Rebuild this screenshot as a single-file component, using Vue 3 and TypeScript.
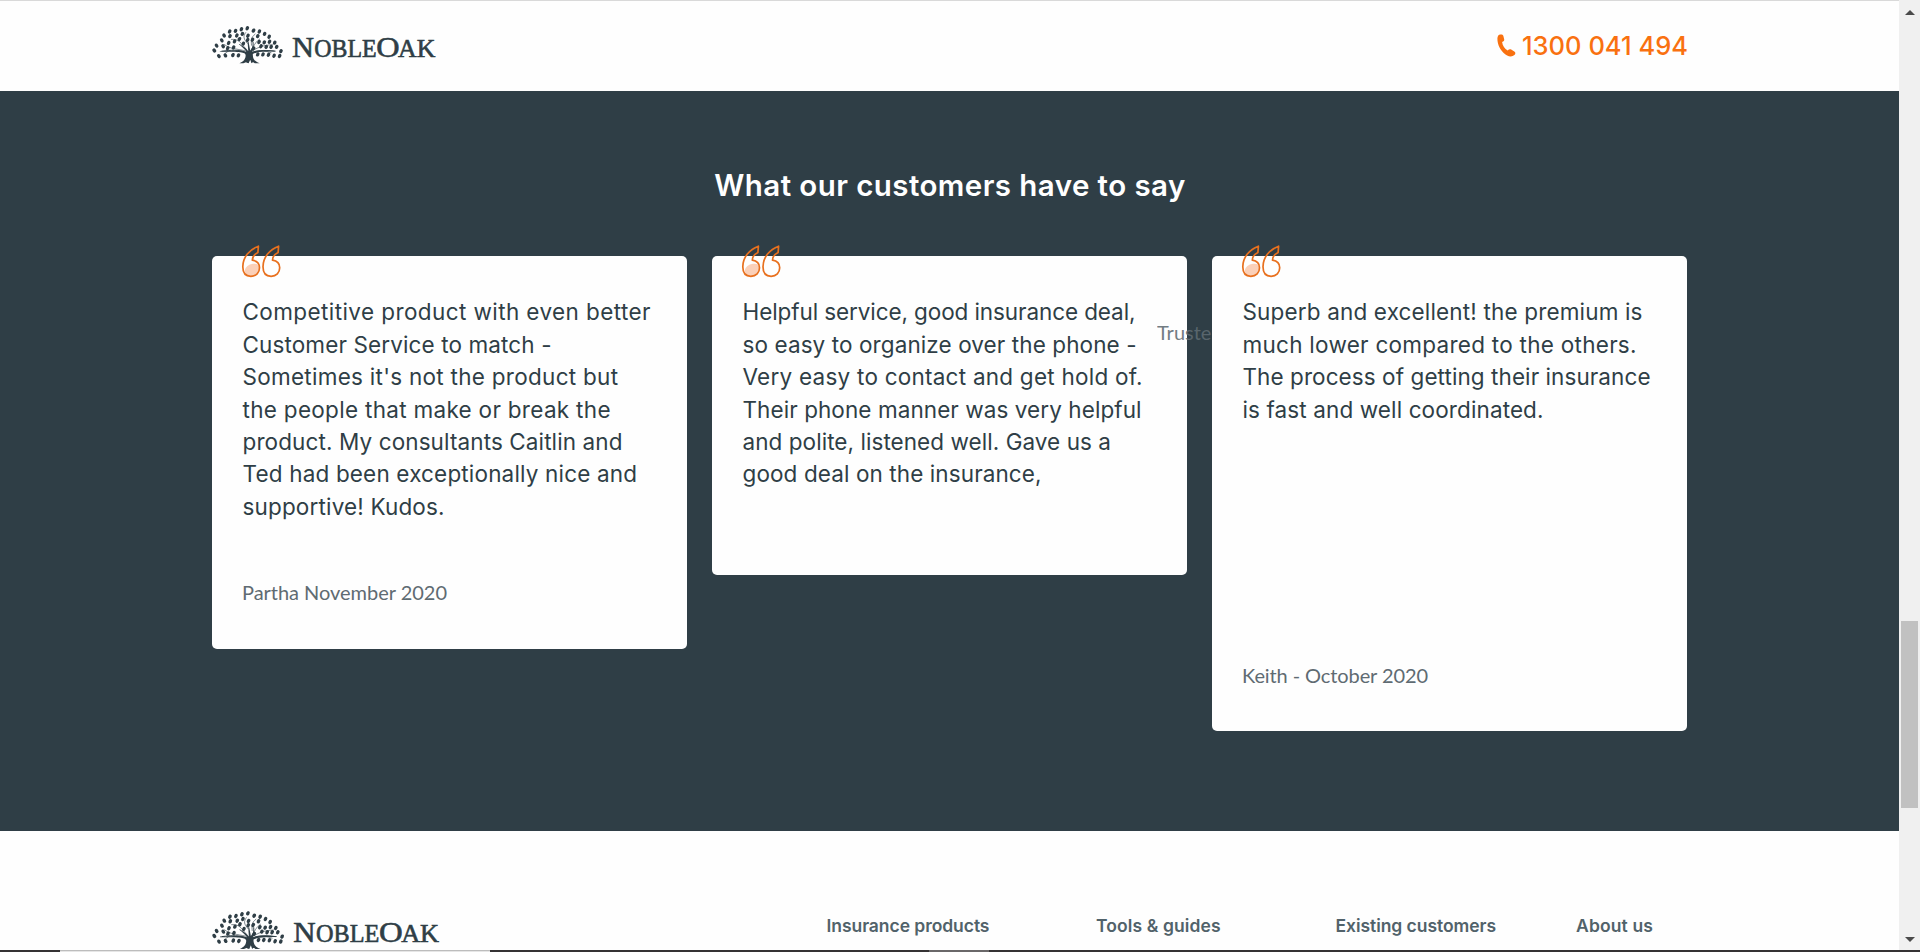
<script setup lang="ts">
import type { Directive } from 'vue'

interface Line { text: string; width: number }
interface Testimonial { lines: Line[]; author: string; authorWidth: number; size: string }

const testimonials: Testimonial[] = [
  {
    size: 'medium',
    author: 'Partha November 2020',
    authorWidth: 205,
    lines: [
      { text: 'Competitive product with even better', width: 408 },
      { text: 'Customer Service to match -', width: 309 },
      { text: "Sometimes it's not the product but", width: 375.5 },
      { text: 'the people that make or break the', width: 368 },
      { text: 'product. My consultants Caitlin and', width: 380 },
      { text: 'Ted had been exceptionally nice and', width: 394.5 },
      { text: 'supportive! Kudos.', width: 202 },
    ],
  },
  {
    size: 'small',
    author: '',
    authorWidth: 0,
    lines: [
      { text: 'Helpful service, good insurance deal,', width: 393 },
      { text: 'so easy to organize over the phone -', width: 394 },
      { text: 'Very easy to contact and get hold of.', width: 400 },
      { text: 'Their phone manner was very helpful', width: 399 },
      { text: 'and polite, listened well. Gave us a', width: 368.5 },
      { text: 'good deal on the insurance,', width: 299 },
    ],
  },
  {
    size: 'large',
    author: 'Keith - October 2020',
    authorWidth: 186,
    lines: [
      { text: 'Superb and excellent! the premium is', width: 400 },
      { text: 'much lower compared to the others.', width: 394 },
      { text: 'The process of getting their insurance', width: 408 },
      { text: 'is fast and well coordinated.', width: 301 },
    ],
  },
]

const footerLinks = [
  { text: 'Insurance products', width: 163 },
  { text: 'Tools & guides', width: 124.5 },
  { text: 'Existing customers', width: 160.5 },
  { text: 'About us', width: 77 },
]

const wordmark = [
  { text: 'N', x: 276, size: 86, width: 66 },
  { text: 'OBLE', x: 343, size: 75, width: 187 },
  { text: 'O', x: 529, size: 87, width: 70 },
  { text: 'AK', x: 594, size: 75, width: 112 },
]

const leaves: number[][] = [
  [570, 43], [588, 41], [606, 36], [624, 33], [643, 40], [661, 43], [677, 50], [691, 59],
  [553, 55], [546, 70], [530, 86], [523, 101], [537, 118], [557, 116], [580, 115], [597, 116],
  [571, 57], [585, 73], [600, 66], [612, 80], [609, 50], [592, 55], [626, 56], [625, 69], [640, 68],
  [656, 57], [660, 75], [676, 76], [692, 74], [708, 77], [714, 90], [727, 103], [723, 118], [706, 117],
  [689, 114], [672, 113], [656, 113], [697, 90], [682, 90], [666, 88], [567, 78], [550, 88],
  [564, 94], [582, 92], [643, 95],
]

// Tracks a single line of text so that it spans the given width.
const vFit: Directive<HTMLElement, number> = {
  mounted(el, binding) {
    const count = (el.textContent ?? '').length
    if (!binding.value || count < 2) return
    const natural = el.getBoundingClientRect().width
    el.style.letterSpacing = `${(binding.value - natural) / (count - 1)}px`
  },
}
</script>

<template>
  <div class="window">
    <svg class="defs" aria-hidden="true">
      <symbol id="tree" viewBox="36 45 680 120">
        <g transform="translate(37 49) scale(.98) translate(-517 -27)">
          <g fill="#2f3e46">
            <ellipse v-for="(leaf, i) in leaves" :key="i" :cx="leaf[0]" :cy="leaf[1]" rx="5.2" ry="6.8"
              :transform="`rotate(${leaf[0] < 560 ? -35 : 28} ${leaf[0]} ${leaf[1]})`" />
            <path d="M600 140 C613 135 619 127 619 115 C617 106 604 105 540 105 L540 103 C585 101 607 99 621 105 C617 96 605 88 598 82 L600 81 C612 89 622 95 627 103 L625 75 L628 75 L633 101 C640 93 641 87 640 75 L643 75 C644 88 643 96 639 105 C651 99 676 99 711 102 L711 104 C675 104 651 105 641 112 C640 126 647 135 662 140 L647 140 L641 136 L637 140 L633 129 L628 140 L620 137 L612 140 Z" />
          </g>
          <g fill="none" stroke="#2f3e46" stroke-width="1.8">
            <path d="M618 102C590 95 572 97 553 82M620 96C603 78 600 65 574 67M638 98C648 79 650 75 663 65M641 101C660 90 673 85 702 83M625 80C613 65 610 59 620 45M637 86C636 69 634 62 649 50M570 100L556 110M674 101L698 108" />
            <path d="M619 108C600 97 575 100 545 103M640 107C660 99 685 100 708 103" stroke-width="3" />
            <path d="M625 138L628 108M640 137L634 108" stroke-width="6" />
          </g>
        </g>
      </symbol>
      <symbol id="quote" viewBox="0 0 40 33">
        <path d="M3.5 26Q5 19.5 12 18.8Q18 18 18 23Q17 30 10.5 31Q5 31 3.5 26Z" fill="#fbd0b8" />
        <g fill="none" stroke="#e8701e" stroke-width="1.7" stroke-linejoin="round">
          <path d="M17.4 1.2C8.7 4.5 1.8 12 1.8 21.8C1.8 28 5 31.3 9.9 31.3C15.1 31.3 18.5 27.7 18.5 22.8C18.5 18.5 15.6 15.8 11.3 15.2C11.3 12 13.5 9.2 16.9 7.4Z" />
          <path d="M37.6 1.2C28.9 4.5 22 12 22 21.8C22 28 25.2 31.3 30.1 31.3C35.3 31.3 38.7 27.7 38.7 22.8C38.7 18.5 35.8 15.8 31.5 15.2C31.5 12 33.7 9.2 37.1 7.4Z" />
        </g>
      </symbol>
    </svg>

    <div class="page">
      <header class="topbar">
        <svg class="logo" viewBox="36 45 680 120">
          <use href="#tree" x="36" y="45" width="680" height="120" />
          <text v-for="part in wordmark" :key="part.x" :x="part.x" y="140" :font-size="part.size"
            :textLength="part.width" lengthAdjust="spacingAndGlyphs">{{ part.text }}</text>
        </svg>
        <a class="phone">
          <svg class="handset" viewBox="0 0 19 23">
            <path d="M2.2.8C4 .1 5.8.3 6.3 1.8L7.2 5.2C7.5 6.6 6.6 7.5 5.1 8C5.6 11.8 7.6 14.6 10.7 16.6C11.8 15.3 12.9 14.9 14.2 15.6L17.3 17.5C18.8 18.5 18.6 20 17.4 21.1C15.5 22.7 12.7 22.9 10.1 21.4C4.8 18.3 1.2 12.8.5 6.7C.2 3.7.6 1.6 2.2.8Z" />
          </svg>
          <span v-fit="166">1300 041 494</span>
        </a>
      </header>

      <main class="reviews">
        <h2><span v-fit="471">What our customers have to say</span></h2>
        <div class="cards">
          <article v-for="item in testimonials" :key="item.size" class="card" :class="item.size">
            <svg class="quote"><use href="#quote" /></svg>
            <blockquote>
              <div v-for="line in item.lines" :key="line.text" class="line">
                <span v-fit="line.width">{{ line.text }}</span>
              </div>
            </blockquote>
            <p v-if="item.author" class="author"><span v-fit="item.authorWidth">{{ item.author }}</span></p>
            <p v-else class="drift">Truste</p>
          </article>
        </div>
      </main>

      <footer class="footer">
        <svg class="logo" viewBox="36 45 680 120">
          <use href="#tree" x="36" y="45" width="680" height="120" />
          <text v-for="part in wordmark" :key="part.x" :x="part.x" y="140" :font-size="part.size"
            :textLength="part.width" lengthAdjust="spacingAndGlyphs">{{ part.text }}</text>
        </svg>
        <nav>
          <a v-for="link in footerLinks" :key="link.text"><span v-fit="link.width">{{ link.text }}</span></a>
        </nav>
      </footer>
    </div>

    <div class="scrollbar">
      <svg viewBox="0 0 10 5"><path d="M0 5L5 0L10 5Z" /></svg>
      <div class="thumb"></div>
      <svg viewBox="0 0 10 5"><path d="M0 0L5 5L10 0Z" /></svg>
    </div>
    <div class="edge"><i></i><i class="pale"></i><i></i><i class="mid"></i><i></i></div>
  </div>
</template>

<style>
body {
  margin: 0;
  overflow: hidden;
}
</style>

<style scoped>
.window {
  position: relative;
  display: grid;
  grid-template-columns: 1899px 21px;
  width: 1920px;
  height: 952px;
  overflow: hidden;
  background: #fefefe;
  font-family: Inter, "Liberation Sans", sans-serif;
}
.defs {
  position: absolute;
  width: 0;
  height: 0;
}
.page {
  display: flex;
  flex-direction: column;
  height: 952px;
  overflow: hidden;
}
span {
  display: inline-block;
  white-space: nowrap;
}
.topbar {
  box-sizing: border-box;
  display: flex;
  flex: none;
  justify-content: space-between;
  height: 91px;
  padding: 0 211px 0 212px;
  border-top: 1px solid #d9d9d9;
}
.logo {
  display: block;
  width: 226.67px;
  height: 40px;
  margin-top: 24px;
  fill: #2f3e46;
  font-family: "Liberation Serif", serif;
}
.logo text {
  stroke: #2f3e46;
  stroke-width: 1.8;
}
.phone {
  display: flex;
  height: 30px;
  margin-top: 30px;
  color: #f97110;
  font-size: 25.5px;
  font-weight: 500;
  line-height: 30px;
}
.handset {
  width: 19px;
  height: 23px;
  margin: 3px 6px 0 0;
  fill: #f97110;
}
.reviews {
  box-sizing: border-box;
  flex: none;
  height: 740px;
  padding: 76px 211px 0 212px;
  background: #2f3e46;
}
h2 {
  height: 36px;
  margin: 0 0 53px;
  color: #fff;
  font-size: 29.5px;
  font-weight: 600;
  line-height: 37px;
  text-align: center;
}
.cards {
  display: grid;
  grid-template-columns: repeat(3, 475px);
  gap: 25px;
  align-items: start;
}
.card {
  position: relative;
  box-sizing: border-box;
  display: flex;
  flex-direction: column;
  justify-content: space-between;
  padding: 40px 30px 42px;
  border-radius: 5px;
  background: #fefefe;
}
.medium {
  height: 393px;
  padding-bottom: 43px;
}
.small {
  height: 319px;
}
.large {
  height: 475px;
}
.quote {
  position: absolute;
  top: -11px;
  left: 29px;
  width: 40px;
  height: 33px;
}
blockquote {
  margin: 0.4px 0 0 0.5px;
  color: #2f3e46;
  font-size: 22.5px;
  font-weight: 400;
  line-height: 32.4px;
}
.line {
  height: 32.4px;
}
.author,
.drift {
  margin: 0;
  color: #5f6b72;
  font-family: Lato, sans-serif;
  font-size: 20px;
  line-height: 28px;
}
.drift {
  position: absolute;
  top: 62px;
  left: 445px;
  opacity: 0.88;
}
.footer {
  display: flex;
  flex: none;
  height: 121px;
  padding-left: 212px;
}
.footer .logo {
  width: 230.5px;
  height: 40.7px;
  margin-top: 79px;
}
.footer nav {
  display: grid;
  grid-template-columns: 269.5px 239.5px 240.5px 80px;
  margin: 82px 0 0 384px;
  color: #51626a;
  font-size: 17.5px;
  font-weight: 600;
  line-height: 26px;
}
.scrollbar {
  display: flex;
  flex-direction: column;
  align-items: center;
  height: 952px;
  background: #f0f0f0;
}
.scrollbar svg {
  flex: none;
  width: 10px;
  height: 5px;
  margin-top: 10px;
  fill: #4a4a4a;
}
.thumb {
  flex: none;
  width: 17px;
  height: 187px;
  margin: 606px 0 119px;
  background: #c1c1c1;
}
.edge {
  position: absolute;
  bottom: 0;
  left: 0;
  display: grid;
  grid-template-columns: 60px 430px 439px 60px 931px;
  width: 1920px;
  height: 2px;
  background: #353334;
}
.pale {
  background: linear-gradient(#bdbdbd 50%, #e6e6e6 50%);
}
.mid {
  background: #6a6869;
}
</style>
